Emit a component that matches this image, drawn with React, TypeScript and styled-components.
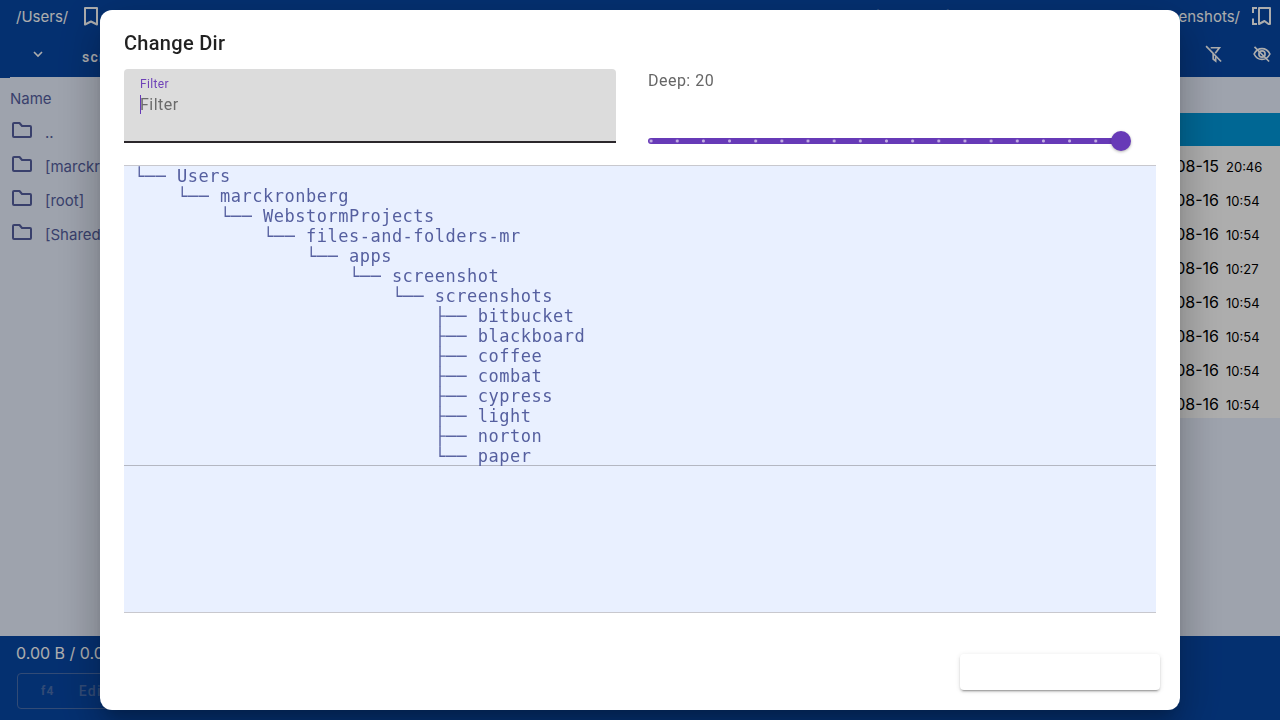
import React from "react";
import styled, { createGlobalStyle } from "styled-components";

const GlobalStyle = createGlobalStyle`
  *, *::before, *::after { box-sizing: border-box; }
  body { margin: 0; font-family: Inter, "Liberation Sans", sans-serif; }
  button, input { font: inherit; }
`;

const Page = styled.div`
  display: flex;
  flex-direction: column;
  min-height: 100vh;
  background: #0747a6;
  color: #fff;
`;

const Columns = styled.div`
  display: grid;
  grid-template-columns: minmax(0, 1fr) minmax(0, 1fr);
`;

const PathBar = styled.div<{ $end?: boolean }>`
  display: flex;
  align-items: center;
  justify-content: ${(p) => (p.$end ? "flex-end" : "flex-start")};
  gap: 12px;
  height: 32px;
  padding: ${(p) => (p.$end ? "0 8px 0 16px" : "0 16px")};
  overflow: hidden;
  white-space: nowrap;
  font-size: 15px;
`;

const IconButton = styled.button`
  display: flex;
  align-items: center;
  justify-content: center;
  flex: none;
  padding: 0;
  border: 0;
  background: none;
  color: inherit;
`;

const TabBar = styled.div<{ $end?: boolean }>`
  display: flex;
  align-items: center;
  justify-content: ${(p) => (p.$end ? "flex-end" : "flex-start")};
  gap: ${(p) => (p.$end ? 28 : 34)}px;
  height: 46px;
  margin-left: ${(p) => (p.$end ? 0 : 10)}px;
  padding: ${(p) => (p.$end ? "0 8px 2px" : "0 18px 2px")};
  border-bottom: 1px solid #e9f0ff;
`;

const Tab = styled.button`
  padding: 6px 0 0;
  border: 0;
  background: none;
  color: inherit;
  font: 500 14px/20px Roboto, sans-serif;
  letter-spacing: 0.09em;
`;

const Panels = styled(Columns)`
  flex: 1;
  align-items: start;
  background: #e9f0ff;
  color: #555f9f;
`;

const FileTable = styled.table`
  width: 100%;
  border-collapse: collapse;
  font-size: 15px;
  th, td {
    padding: 0;
    font-weight: 400;
    text-align: left;
    white-space: nowrap;
  }
`;

const HeadCell = styled.th`
  height: 35px;
`;

const HeadLabel = styled.span`
  display: block;
  padding: 5px 0 0 10px;
`;

const FileRow = styled.tr<{ $active?: boolean; $file?: boolean }>`
  height: ${(p) => (p.$active ? 33 : 34)}px;
  background: ${(p) => (p.$active ? "#0098db" : p.$file ? "#fff" : "none")};
  color: ${(p) => (p.$file ? "#000" : "inherit")};
`;

const Entry = styled.span`
  display: flex;
  align-items: center;
  gap: 11px;
  padding-left: 10px;
  span { padding-top: 4px; }
`;

const Stamp = styled.span`
  display: flex;
  align-items: baseline;
  justify-content: flex-end;
  gap: 7px;
  padding: 6px 18px 0 0;
  font-size: 16px;
  small { width: 36px; font-size: 13px; }
`;

const Footer = styled.footer`
  height: 84px;
  padding: 7px 16px;
`;

const Summary = styled.p`
  margin: 0 0 10px;
  font-size: 16px;
  line-height: 20px;
`;

const KeyButton = styled.button`
  display: flex;
  align-items: center;
  gap: 24px;
  height: 36px;
  margin: 0 1px;
  padding: 0 23px;
  border: 1px solid currentColor;
  border-radius: 4px;
  background: none;
  color: #4a6fae;
  font: 500 14px/20px Roboto, sans-serif;
  letter-spacing: 0.09em;
  b { font-size: 12px; }
`;

const Scrim = styled.div`
  position: fixed;
  inset: 0;
  display: flex;
  padding: 10px 100px;
  background: rgba(0, 0, 0, 0.32);
`;

const Dialog = styled.section`
  display: flex;
  flex-direction: column;
  flex: 1;
  min-width: 0;
  border-radius: 12px;
  background: #fff;
  box-shadow: 0 11px 15px -7px rgba(0, 0, 0, 0.2), 0 24px 38px 3px rgba(0, 0, 0, 0.14),
    0 9px 46px 8px rgba(0, 0, 0, 0.12);
  color: rgba(0, 0, 0, 0.87);
  font-family: Roboto, sans-serif;
`;

const Title = styled.h2`
  margin: 0;
  padding: 17px 24px 10px;
  font-size: 20px;
  font-weight: 500;
  line-height: 32px;
  letter-spacing: 0.015em;
`;

const Controls = styled(Columns)`
  padding: 0 24px;
`;

const Field = styled.label`
  display: flex;
  flex-direction: column;
  height: 74px;
  margin-right: 24px;
  padding: 7px 16px;
  border-bottom: 2px solid #2b272b;
  border-radius: 4px 4px 0 0;
  background: #dcdcdc;
  color: #6f42b8;
  font-size: 12px;
  line-height: 16px;
  letter-spacing: 0.03em;
`;

const FieldLine = styled.span`
  display: flex;
  align-items: center;
  height: 25px;
`;

const Caret = styled.span`
  width: 1px;
  height: 19px;
  margin-right: -1px;
  background: #673ab7;
`;

const TextInput = styled.input`
  flex: 1;
  min-width: 0;
  padding: 0;
  border: 0;
  outline: 0;
  background: none;
  font-size: 16px;
  letter-spacing: 0.03em;
  &::placeholder { color: #6b6b6b; opacity: 1; }
`;

const Depth = styled.label`
  display: flex;
  flex-direction: column;
  gap: 38px;
  padding: 0 25px 0 8px;
  color: #666;
  font-size: 16px;
  line-height: 24px;
  letter-spacing: 0.03em;
`;

const Slider = styled.input`
  appearance: none;
  width: 100%;
  height: 20px;
  margin: 0;
  background: none;
  &::-webkit-slider-runnable-track {
    height: 6px;
    border-radius: 3px;
    background: radial-gradient(circle, #c3b0e2 1px, transparent 2px) -10px 0 / calc((100% - 12px) / 18) 6px repeat-x,
      linear-gradient(#673ab7, #673ab7) 0 0 / calc(100% - 10px) 6px no-repeat;
  }
  &::-webkit-slider-thumb {
    appearance: none;
    width: 20px;
    height: 20px;
    margin-top: -7px;
    border-radius: 50%;
    background: #673ab7;
    box-shadow: 0 1px 3px rgba(0, 0, 0, 0.3);
  }
`;

const TreeBox = styled.div`
  flex: 1;
  margin: 14px 24px 0;
  border: solid #c8c8ce;
  border-width: 1px 0;
  background: #e9f0ff;
`;

const Tree = styled.pre`
  margin: 0;
  padding: 0 10px;
  box-shadow: inset 0 -1px #b4b7c2;
  color: #555f9f;
  font: 17px/20px "DejaVu Sans Mono", monospace;
  letter-spacing: 0.03em;
`;

const Actions = styled.div`
  display: flex;
  justify-content: flex-end;
  padding: 41px 20px 20px;
`;

const RaisedButton = styled.button`
  width: 200px;
  height: 36px;
  border: 0;
  border-radius: 4px;
  background: #fff;
  box-shadow: 0 3px 1px -2px rgba(0, 0, 0, 0.2), 0 2px 2px rgba(0, 0, 0, 0.14), 0 1px 5px rgba(0, 0, 0, 0.12);
`;

const Bookmark = () => (
  <svg width="22" height="22" viewBox="0 0 22 22" fill="none" stroke="currentColor" strokeWidth="2">
    <path d="M5 3h12v16.500l-6-3-6 3z" strokeLinejoin="round" />
  </svg>
);

const Bookmarks = () => (
  <svg width="20" height="20" viewBox="0 0 20 20" fill="none" stroke="currentColor" strokeWidth="2">
    <path d="M7 2h11v16h-1.500l-4-3-5.500 3z" strokeLinejoin="round" />
    <path d="M5 2H1v5M1 12.500V18h4" />
  </svg>
);

const ChevronDown = () => (
  <svg width="20" height="20" viewBox="0 0 20 20" fill="none" stroke="currentColor" strokeWidth="1.600">
    <path d="m6 8 4 4 4-4" />
  </svg>
);

const FilterOff = () => (
  <svg width="20" height="20" viewBox="0 0 24 24" fill="none" stroke="currentColor" strokeWidth="2">
    <path d="M2.500 2.500 20.500 21" />
    <path d="M8 4.500h10.500L13.500 11M11 11.500V18l3 2.500V15" />
  </svg>
);

const EyeOff = () => (
  <svg width="20" height="20" viewBox="0 0 24 24" fill="none" stroke="currentColor" strokeWidth="2">
    <path d="M2.500 12c2-4 5.500-6.500 9.500-6.500s7.500 2.500 9.500 6.500c-2 4-5.500 6.500-9.500 6.500S4.500 16 2.500 12z" />
    <circle cx="12" cy="12" r="3.700" />
    <path d="M3 3.500 20.500 21" />
  </svg>
);

const Folder = () => (
  <svg width="24" height="24" viewBox="0 0 24 24" fill="none" stroke="#555f9f" strokeWidth="2">
    <path d="M4 5h5.500l2.500 3h8a1 1 0 0 1 1 1v9a1 1 0 0 1-1 1H4a1 1 0 0 1-1-1V6a1 1 0 0 1 1-1z" strokeLinejoin="round" />
  </svg>
);

const folders = ["..", "[marckronberg]", "[root]", "[Shared]"];

const stamps = [
  ["2023-08-15", "20:46"],
  ["2023-08-16", "10:54"],
  ["2023-08-16", "10:54"],
  ["2023-08-16", "10:27"],
  ["2023-08-16", "10:54"],
  ["2023-08-16", "10:54"],
  ["2023-08-16", "10:54"],
  ["2023-08-16", "10:54"],
];

const parents = [
  "Users",
  "marckronberg",
  "WebstormProjects",
  "files-and-folders-mr",
  "apps",
  "screenshot",
  "screenshots",
];
const children = ["bitbucket", "blackboard", "coffee", "combat", "cypress", "light", "norton", "paper"];

const tree = [
  ...parents.map((name, depth) => " ".repeat(depth * 4) + "└── " + name),
  ...children.map(
    (name, i) => " ".repeat(parents.length * 4) + (i === children.length - 1 ? "└── " : "├── ") + name
  ),
].join("\n");

export default function App() {
  return (
    <>
      <GlobalStyle />
      <Page>
        <Columns>
          <PathBar>
            <span>/Users/</span>
            <IconButton aria-label="Bookmark"><Bookmark /></IconButton>
          </PathBar>
          <PathBar $end>
            <span>/{parents.join("/")}/</span>
            <IconButton aria-label="Bookmarks"><Bookmarks /></IconButton>
          </PathBar>
          <TabBar>
            <IconButton aria-label="Open tabs"><ChevronDown /></IconButton>
            <Tab>screenshots</Tab>
          </TabBar>
          <TabBar $end>
            <IconButton aria-label="Clear filter"><FilterOff /></IconButton>
            <IconButton aria-label="Hidden files"><EyeOff /></IconButton>
          </TabBar>
        </Columns>
        <Panels>
          <FileTable>
            <thead>
              <tr><HeadCell><HeadLabel>Name</HeadLabel></HeadCell></tr>
            </thead>
            <tbody>
              {folders.map((name) => (
                <FileRow key={name}>
                  <td><Entry><Folder /><span>{name}</span></Entry></td>
                </FileRow>
              ))}
            </tbody>
          </FileTable>
          <FileTable>
            <thead>
              <tr><HeadCell aria-label="Date" /></tr>
            </thead>
            <tbody>
              <FileRow $active><td /></FileRow>
              {stamps.map(([date, time], i) => (
                <FileRow key={i} $file>
                  <td><Stamp>{date}<small>{time}</small></Stamp></td>
                </FileRow>
              ))}
            </tbody>
          </FileTable>
        </Panels>
        <Footer>
          <Summary>0.00 B / 0.00 B</Summary>
          <KeyButton disabled><b>f4</b>Edit</KeyButton>
        </Footer>
      </Page>
      <Scrim>
        <Dialog role="dialog" aria-modal="true" aria-labelledby="dialog-title">
          <Title id="dialog-title">Change Dir</Title>
          <Controls>
            <Field>
              Filter
              <FieldLine><Caret /><TextInput placeholder="Filter" /></FieldLine>
            </Field>
            <Depth>
              Deep: 20
              <Slider type="range" min={2} max={20} defaultValue={20} />
            </Depth>
          </Controls>
          <TreeBox><Tree>{tree}</Tree></TreeBox>
          <Actions><RaisedButton aria-label="Cancel" /></Actions>
        </Dialog>
      </Scrim>
    </>
  );
}
